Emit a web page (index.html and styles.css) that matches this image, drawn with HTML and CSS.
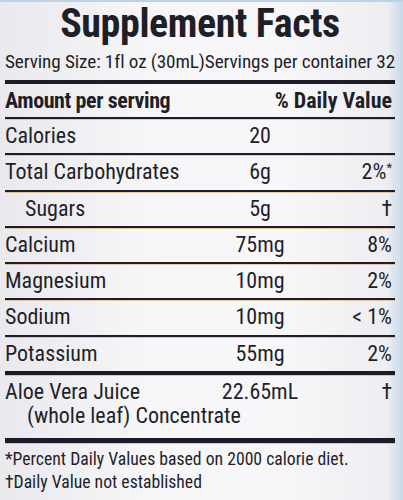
FILE: index.html
```html
<!DOCTYPE html>
<html lang="en">
 <head>
  <title>Supplement Facts</title>
  <meta charset="UTF-8">
  <link rel="stylesheet" href="styles.css">
 </head>
 <body>

 <div class="label">
  <h1 class="title">Supplement Facts</h1>
  <div class="serving">Serving Size: 1fl oz (30mL)Servings per container 32</div>

  <div class="facts">
   <div class="row head thick-top">
    <span class="name">Amount per serving</span>
    <span class="dv">% Daily Value</span>
   </div>
   <div class="row">
    <span class="name">Calories</span>
    <span class="amt">20</span>
    <span class="dv"></span>
   </div>
   <div class="row">
    <span class="name">Total Carbohydrates</span>
    <span class="amt">6g</span>
    <span class="dv">2%<sup>*</sup></span>
   </div>
   <div class="row">
    <span class="name sub">Sugars</span>
    <span class="amt">5g</span>
    <span class="dv">†</span>
   </div>
   <div class="row">
    <span class="name">Calcium</span>
    <span class="amt">75mg</span>
    <span class="dv">8%</span>
   </div>
   <div class="row">
    <span class="name">Magnesium</span>
    <span class="amt">10mg</span>
    <span class="dv">2%</span>
   </div>
   <div class="row">
    <span class="name">Sodium</span>
    <span class="amt">10mg</span>
    <span class="dv">&lt; 1%</span>
   </div>
   <div class="row last">
    <span class="name">Potassium</span>
    <span class="amt">55mg</span>
    <span class="dv">2%</span>
   </div>
   <div class="row blend">
    <span class="name">Aloe Vera Juice<br><span class="cont">(whole leaf) Concentrate</span></span>
    <span class="amt">22.65mL</span>
    <span class="dv">†</span>
   </div>
  </div>

  <div class="notes">
   <p>*Percent Daily Values based on 2000 calorie diet.</p>
   <p>†Daily Value not established</p>
  </div>
 </div>

</body>
</html>
```

FILE: styles.css
```css
body { margin: 0; background: linear-gradient(90deg, #e9e9ee 0%, #f6f6f8 35%, #f7f7f9 70%, #eeeef2 96%, #c9d9e8 100%); color: #1f1f28; font-family: "Roboto Condensed", "Open Sans", sans-serif; }
.label { border-top: 2px solid #bcd3e6; padding: 0 8px 0 5px; height: 498px; }
.title { margin: 0; font-size: 40px; font-weight: bold; text-align: center; line-height: 44px; height: 46px; letter-spacing: -0.4px; }
.serving { font-size: 19.2px; line-height: 22px; height: 32px; padding-top: 3px; box-sizing: border-box; white-space: nowrap; letter-spacing: -0.1px; }

.facts { font-size: 22px; }
.row { display: grid; grid-template-columns: 200px 110px 1fr; height: 34.3px; line-height: 34px; white-space: nowrap; border-bottom: 2px solid #1e1e2a; box-shadow: 0 1px 0 rgba(205, 150, 70, .45); }
.row .amt { text-align: center; }
.row .dv { text-align: right; padding-right: 3px; }
.row sup { font-size: 13px; line-height: 0; vertical-align: 7px; }
.head { display: flex; justify-content: space-between; font-weight: bold; height: 33px; }
.head .name { letter-spacing: -0.4px; }
.thick-top { border-top: 4px solid #1c1c28; }
.sub { padding-left: 20px; }
.last { border-bottom: 4px solid #1c1c28; height: 34px; }
.blend { height: 58px; line-height: 24px; padding-top: 5px; border-bottom: 5px solid #1c1c28; box-sizing: content-box; }
.blend .cont { padding-left: 22px; }

.notes { font-size: 17.7px; line-height: 23px; padding-top: 5px; }
.notes p { margin: 0; white-space: nowrap; }
```
